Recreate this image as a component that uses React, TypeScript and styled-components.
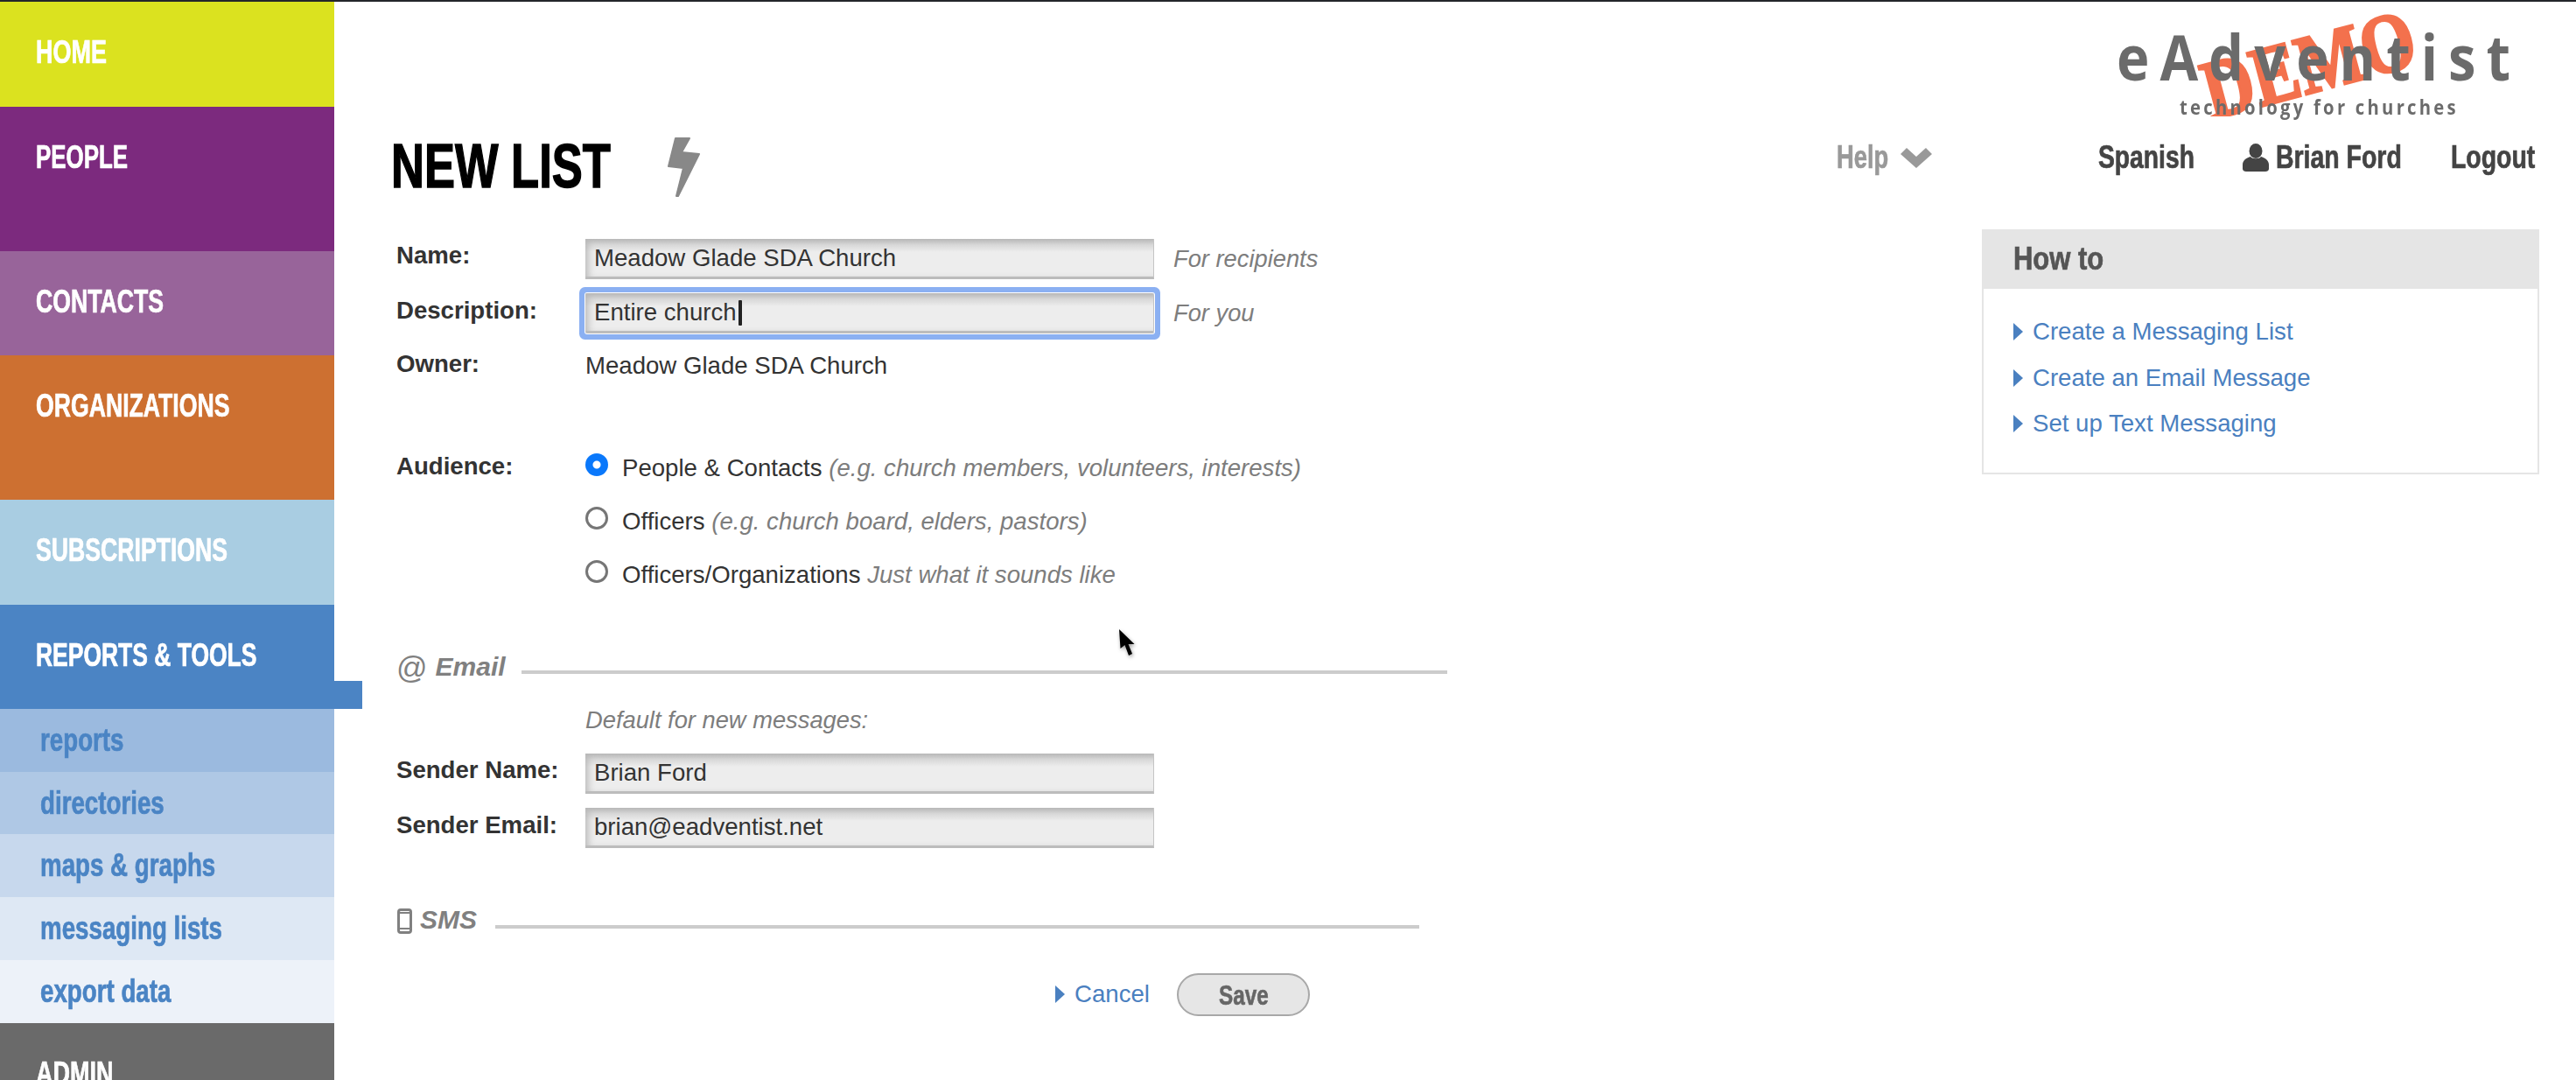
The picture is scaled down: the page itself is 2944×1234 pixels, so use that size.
import React from 'react';
import styled, { createGlobalStyle } from 'styled-components';

const GlobalStyle = createGlobalStyle`
  html, body {
    margin: 0;
    padding: 0;
    background: #fff;
    font-family: "Liberation Sans", Arial, sans-serif;
  }
  * {
    box-sizing: border-box;
  }
`;

// Page frame
const Page = styled.div`
  position: relative;
  display: flex;
  width: 2944px;
  height: 1234px;
  overflow: hidden;
  border-top: 2px solid #24262a;
`;

// Sidebar
const Sidebar = styled.nav`
  position: relative;
  z-index: 1;
  display: flex;
  flex-direction: column;
  flex: none;
  width: 382px;
`;

const NavBlock = styled.a<{ $bg: string; $height: number; $active?: boolean }>`
  position: relative;
  display: block;
  height: ${(p) => p.$height}px;
  padding: 38px 0 0 41px;
  background: ${(p) => p.$bg};
  color: #fff;
  font-size: 36px;
  font-weight: 700;
  line-height: 40px;
  white-space: nowrap;

  ${(p) =>
    p.$active &&
    `
    &::after {
      content: '';
      position: absolute;
      left: 100%;
      bottom: 0;
      width: 32px;
      height: 32px;
      background: ${p.$bg};
    }
  `}
`;

const SubLink = styled.a<{ $bg: string }>`
  display: flex;
  align-items: center;
  height: 72px;
  padding-left: 46px;
  background: ${(p) => p.$bg};
  color: #4a84c4;
  font-size: 36px;
  font-weight: 700;
  white-space: nowrap;
`;

// Condensed type: the original uses a narrow face, so the glyphs are squeezed
const Squeezed = styled.span<{ $k: number; $w?: number; $stroke?: number }>`
  display: inline-block;
  width: ${(p) => (p.$w ? `${p.$w}px` : 'auto')};
  white-space: nowrap;
  transform: scaleX(${(p) => p.$k});
  transform-origin: left center;
  -webkit-text-stroke: ${(p) => p.$stroke ?? 0.7}px currentColor;
`;

// Main column
const Main = styled.main`
  flex: 1;
  display: flex;
  flex-direction: column;
  min-width: 0;
`;

const LogoRow = styled.div`
  display: flex;
  justify-content: flex-end;
  flex: none;
  height: 148px;
  padding-right: 70px;
`;

const Logo = styled.div`
  position: relative;
  width: 460px;
  height: 131px;
`;

const Stamp = styled.div`
  position: absolute;
  left: 0;
  top: 0;
  width: 460px;
  height: 131px;
  overflow: hidden;
`;

const StampText = styled.span`
  position: absolute;
  left: 105px;
  top: 54px;
  color: #f3714d;
  font-family: "Liberation Serif", "Times New Roman", serif;
  font-size: 96px;
  font-weight: 700;
  line-height: 100px;
  white-space: nowrap;
  transform: rotate(-15deg) scaleX(0.83);
  transform-origin: left center;
  -webkit-text-stroke: 3px #f3714d;
`;

const LogoName = styled.div`
  position: absolute;
  left: 5px;
  top: 16px;
  color: #6b6b6b;
  font-family: "Open Sans", sans-serif;
  font-size: 72px;
  font-weight: 700;
  line-height: 92px;
  letter-spacing: 13.6px;
  white-space: nowrap;
  transform: scaleX(0.88);
  transform-origin: left center;
`;

const LogoTag = styled.div`
  position: absolute;
  left: 77px;
  top: 104px;
  color: #6b6b6b;
  font-family: "Open Sans", sans-serif;
  font-size: 23px;
  font-weight: 700;
  line-height: 32px;
  letter-spacing: 3.7px;
  white-space: nowrap;
  transform: scaleX(0.88);
  transform-origin: left center;
`;

const TitleRow = styled.div`
  display: flex;
  justify-content: space-between;
  flex: none;
  height: 110px;
  padding: 0 47px 0 65px;
`;

const TitleGroup = styled.div`
  display: flex;
  align-items: flex-start;
  gap: 65px;
`;

const Title = styled.h1`
  margin: 0;
  color: #000;
  font-size: 70px;
  font-weight: 700;
  line-height: 80px;
`;

const Bolt = styled.svg`
  flex: none;
  margin-top: 5px;
`;

const TopNav = styled.div`
  display: flex;
  align-items: center;
  height: 40px;
  margin-top: 10px;
  font-size: 36px;
  font-weight: 700;
  line-height: 40px;
`;

const TopLink = styled.a<{ $muted?: boolean; $gap?: number }>`
  display: flex;
  align-items: center;
  margin-left: ${(p) => p.$gap || 0}px;
  color: ${(p) => (p.$muted ? '#999' : '#444')};
`;

const NavIcon = styled.svg<{ $gap: number }>`
  flex: none;
  margin-left: ${(p) => p.$gap}px;
`;

const Body = styled.div`
  position: relative;
  display: flex;
  justify-content: space-between;
  align-items: flex-start;
  padding: 0 42px 0 70px;
`;

// Form
const Form = styled.form`
  display: flex;
  flex-direction: column;
  padding-top: 13px;
`;

const FieldRow = styled.div<{ $top?: number; $height?: number }>`
  display: grid;
  grid-template-columns: 217px 650px auto;
  align-items: center;
  height: ${(p) => p.$height || 46}px;
  margin-top: ${(p) => p.$top || 0}px;
  color: #333;
  font-size: 27.6px;
`;

const Label = styled.label<{ $lift?: number }>`
  padding-left: 1px;
  padding-bottom: ${(p) => p.$lift ?? 8}px;
  color: #333;
  font-size: 27.6px;
  font-weight: 700;
`;

const InputBox = styled.div`
  position: relative;
  height: 46px;
`;

const TextInput = styled.input<{ $focused?: boolean }>`
  display: block;
  width: 100%;
  height: 100%;
  padding: 0 0 0 10px;
  border: none;
  border-right: 1px solid #c4c4c4;
  border-bottom: 3px solid #bcbcbc;
  border-radius: ${(p) => (p.$focused ? 2 : 0)}px;
  outline: none;
  background: linear-gradient(#b8b8b8, #d8d8d8 7px, #ededed 15px);
  color: #333;
  font-family: "Liberation Sans", Arial, sans-serif;
  font-size: 27.6px;
  box-shadow: inset 7px 0 8px -4px #b8b8b8
    ${(p) => (p.$focused ? ', 0 0 0 1px #fff, 0 0 0 7px #8bb0f2' : '')};
`;

const Caret = styled.span`
  position: absolute;
  left: 175px;
  top: 8px;
  width: 4px;
  height: 29px;
  background: #222;
  border-radius: 1px;
`;

const Hint = styled.em`
  margin-left: 22px;
  color: #7d7d7d;
  font-size: 27.3px;
`;

const AudienceBlock = styled.div`
  display: grid;
  grid-template-columns: 217px auto;
  margin-top: 61px;
`;

const AudienceLabel = styled(Label)`
  padding-top: 17px;
  padding-bottom: 0;
  line-height: 32px;
`;

const RadioList = styled.div`
  display: flex;
  flex-direction: column;
`;

const RadioRow = styled.label`
  display: flex;
  align-items: center;
  gap: 16px;
  height: 61px;
  color: #333;
  font-size: 27.6px;
`;

const RadioDot = styled.input`
  appearance: none;
  flex: none;
  width: 26px;
  height: 26px;
  margin: 0;
  border: 3px solid #767676;
  border-radius: 50%;
  background: #fff;

  &:checked {
    border: none;
    background: radial-gradient(circle, #fff 0 4px, #0a78fb 5px);
  }
`;

const RadioText = styled.span`
  padding-top: 9px;
`;

const Note = styled.em`
  color: #7d7d7d;
`;

const SectionHead = styled.div<{ $width: number; $height: number; $top: number }>`
  display: flex;
  align-items: center;
  width: ${(p) => p.$width}px;
  height: ${(p) => p.$height}px;
  margin-top: ${(p) => p.$top}px;
  color: #808080;
`;

const AtSign = styled.span`
  margin-right: 9px;
  padding-left: 1px;
  font-size: 35px;
  line-height: 40px;
`;

const SectionTitle = styled.span`
  padding-bottom: 2px;
  font-size: 30px;
  font-weight: 700;
  font-style: italic;
  line-height: 36px;
`;

const SectionRule = styled.span<{ $gap: number; $drop: number }>`
  flex: 1;
  height: 4px;
  margin-left: ${(p) => p.$gap}px;
  margin-top: ${(p) => p.$drop}px;
  background: #cccccc;
`;

const DefaultNote = styled.em`
  display: block;
  height: 46px;
  margin: 15px 0 0 217px;
  color: #7d7d7d;
  font-size: 27.3px;
  line-height: 46px;
`;

const PhoneIcon = styled.svg`
  flex: none;
  margin: 0 9px 0 2px;
`;

const FormFooter = styled.div`
  display: flex;
  justify-content: flex-end;
  align-items: center;
  width: 1045px;
  height: 49px;
  margin-top: 42px;
`;

const CancelLink = styled.a`
  display: flex;
  align-items: center;
  gap: 11px;
  margin-right: 31px;
  padding-bottom: 2px;
  color: #4a80c0;
  font-size: 27.6px;
  line-height: 32px;
`;

const Arrow = styled.i`
  flex: none;
  width: 0;
  height: 0;
  border-top: 10px solid transparent;
  border-bottom: 10px solid transparent;
  border-left: 11px solid #4a80c0;
`;

const SaveButton = styled.button`
  display: flex;
  justify-content: center;
  align-items: center;
  width: 152px;
  height: 49px;
  padding: 2px 0 0;
  border: 2px solid #a8a8a8;
  border-radius: 25px;
  background: #e6e6e6;
  color: #666;
  font-family: "Liberation Sans", Arial, sans-serif;
  font-size: 32px;
  font-weight: 700;
`;

const SaveLabel = styled.span`
  transform: scaleX(0.76);
  -webkit-text-stroke: 0.6px currentColor;
`;

// Right panel
const Panel = styled.aside`
  flex: none;
  width: 637px;
  height: 280px;
  margin-top: 2px;
  border: 2px solid #e5e5e5;
`;

const PanelHead = styled.h2`
  height: 66px;
  margin: 0;
  padding: 0 0 0 34px;
  background: #e5e5e5;
  color: #555;
  font-size: 36px;
  font-weight: 700;
  line-height: 64px;
`;

const PanelList = styled.div`
  display: flex;
  flex-direction: column;
  padding: 23px 0 0 34px;
`;

const PanelLink = styled.a`
  display: flex;
  align-items: center;
  gap: 11px;
  height: 52.5px;
  color: #4a80c0;
  font-size: 27.6px;
`;

const Pointer = styled.svg`
  position: absolute;
  left: 1278px;
  top: 716px;
  z-index: 2;
  filter: drop-shadow(1px 2px 2px rgba(0, 0, 0, 0.4));
`;

const subLinks = [
  { label: 'reports', bg: '#9bbadf' },
  { label: 'directories', bg: '#afc8e5' },
  { label: 'maps & graphs', bg: '#c7d8ed' },
  { label: 'messaging lists', bg: '#dee8f4' },
  { label: 'export data', bg: '#edf2f9' },
];

const howTo = ['Create a Messaging List', 'Create an Email Message', 'Set up Text Messaging'];

export default function App() {
  return (
    <Page>
      <GlobalStyle />
      <Sidebar>
        <NavBlock $bg="#dbe21f" $height={120}><Squeezed $k={0.75}>HOME</Squeezed></NavBlock>
        <NavBlock $bg="#7c2a7e" $height={165}><Squeezed $k={0.72}>PEOPLE</Squeezed></NavBlock>
        <NavBlock $bg="#98649a" $height={120}><Squeezed $k={0.74}>CONTACTS</Squeezed></NavBlock>
        <NavBlock $bg="#cd7031" $height={165}><Squeezed $k={0.74}>ORGANIZATIONS</Squeezed></NavBlock>
        <NavBlock $bg="#a9cde2" $height={120}><Squeezed $k={0.74}>SUBSCRIPTIONS</Squeezed></NavBlock>
        <NavBlock $bg="#4b84c4" $height={119} $active><Squeezed $k={0.735}>REPORTS &amp; TOOLS</Squeezed></NavBlock>
        {subLinks.map((s) => (
          <SubLink key={s.label} $bg={s.bg}><Squeezed $k={0.77}>{s.label}</Squeezed></SubLink>
        ))}
        <NavBlock $bg="#6a6a6a" $height={65}><Squeezed $k={0.75}>ADMIN</Squeezed></NavBlock>
      </Sidebar>

      <Main>
        <LogoRow>
          <Logo>
            <Stamp><StampText>DEMO</StampText></Stamp>
            <LogoName>eAdventist</LogoName>
            <LogoTag>technology for churches</LogoTag>
          </Logo>
        </LogoRow>

        <TitleRow>
          <TitleGroup>
            <Title><Squeezed $k={0.75} $w={250} $stroke={1.5}>NEW LIST</Squeezed></Title>
            <Bolt width="39" height="72" viewBox="0 0 39 72">
              <path
                d="M10 3 H26 L17 19 L37 21 L13 69 H11 L19 37 L2 35 Z"
                fill="#888"
                stroke="#888"
                strokeWidth="2"
                strokeLinejoin="round"
              />
            </Bolt>
          </TitleGroup>
          <TopNav>
            <TopLink $muted><Squeezed $k={0.76} $w={61}>Help</Squeezed></TopLink>
            <NavIcon $gap={12} width="36" height="23" viewBox="0 0 36 23">
              <path d="M0 7 L7 0 L18 10 L29 0 L36 7 L18 23 Z" fill="#999" />
            </NavIcon>
            <TopLink $gap={190}><Squeezed $k={0.785} $w={110}>Spanish</Squeezed></TopLink>
            <NavIcon $gap={55} width="30" height="32" viewBox="0 0 30 32">
              <ellipse cx="15" cy="8.5" rx="7.5" ry="8.5" fill="#444" />
              <path
                d="M0 29 V24 C0 19 5 16 9 15 C11 18 19 18 21 15 C25 16 30 19 30 24 V29 C30 31 28 32 26 32 H4 C2 32 0 31 0 29 Z"
                fill="#444"
              />
            </NavIcon>
            <TopLink $gap={8}><Squeezed $k={0.79} $w={144}>Brian Ford</Squeezed></TopLink>
            <TopLink $gap={56}><Squeezed $k={0.79} $w={96}>Logout</Squeezed></TopLink>
          </TopNav>
        </TitleRow>

        <Body>
          <Form>
            <FieldRow>
              <Label>Name:</Label>
              <InputBox><TextInput readOnly value="Meadow Glade SDA Church" /></InputBox>
              <Hint>For recipients</Hint>
            </FieldRow>
            <FieldRow $top={16}>
              <Label $lift={7}>Description:</Label>
              <InputBox>
                <TextInput $focused readOnly value="Entire church" />
                <Caret />
              </InputBox>
              <Hint>For you</Hint>
            </FieldRow>
            <FieldRow $top={16} $height={42}>
              <Label $lift={5}>Owner:</Label>
              <span>Meadow Glade SDA Church</span>
            </FieldRow>

            <AudienceBlock>
              <AudienceLabel>Audience:</AudienceLabel>
              <RadioList>
                <RadioRow>
                  <RadioDot type="radio" name="audience" defaultChecked />
                  <RadioText>People &amp; Contacts <Note>(e.g. church members, volunteers, interests)</Note></RadioText>
                </RadioRow>
                <RadioRow>
                  <RadioDot type="radio" name="audience" />
                  <RadioText>Officers <Note>(e.g. church board, elders, pastors)</Note></RadioText>
                </RadioRow>
                <RadioRow>
                  <RadioDot type="radio" name="audience" />
                  <RadioText>Officers/Organizations <Note>Just what it sounds like</Note></RadioText>
                </RadioRow>
              </RadioList>
            </AudienceBlock>

            <SectionHead $width={1202} $height={45} $top={57}>
              <AtSign>@</AtSign>
              <SectionTitle>Email</SectionTitle>
              <SectionRule $gap={18} $drop={10} />
            </SectionHead>

            <DefaultNote>Default for new messages:</DefaultNote>
            <FieldRow $top={15}>
              <Label $lift={8}>Sender Name:</Label>
              <InputBox><TextInput readOnly value="Brian Ford" /></InputBox>
            </FieldRow>
            <FieldRow $top={16}>
              <Label $lift={7}>Sender Email:</Label>
              <InputBox><TextInput readOnly value="brian@eadventist.net" /></InputBox>
            </FieldRow>

            <SectionHead $width={1170} $height={36} $top={65}>
              <PhoneIcon width="17" height="29" viewBox="0 0 17 29">
                <rect x="1.5" y="1.5" width="14" height="26" rx="2.5" fill="none" stroke="#808080" strokeWidth="3" />
                <rect x="1.5" y="4" width="14" height="2" fill="#808080" />
                <rect x="1.5" y="22" width="14" height="2" fill="#808080" />
              </PhoneIcon>
              <SectionTitle>SMS</SectionTitle>
              <SectionRule $gap={21} $drop={14} />
            </SectionHead>

            <FormFooter>
              <CancelLink><Arrow />Cancel</CancelLink>
              <SaveButton type="button"><SaveLabel>Save</SaveLabel></SaveButton>
            </FormFooter>
          </Form>

          <Panel>
            <PanelHead><Squeezed $k={0.86}>How to</Squeezed></PanelHead>
            <PanelList>
              {howTo.map((t) => (
                <PanelLink key={t}><Arrow />{t}</PanelLink>
              ))}
            </PanelList>
          </Panel>
        </Body>
      </Main>

      <Pointer width="20" height="34" viewBox="0 0 20 34">
        <path d="M1 1 L2.5 23 L7.5 19 L12 31 L16 29 L11.5 18 L18.5 18 Z" fill="#000" />
      </Pointer>
    </Page>
  );
}
